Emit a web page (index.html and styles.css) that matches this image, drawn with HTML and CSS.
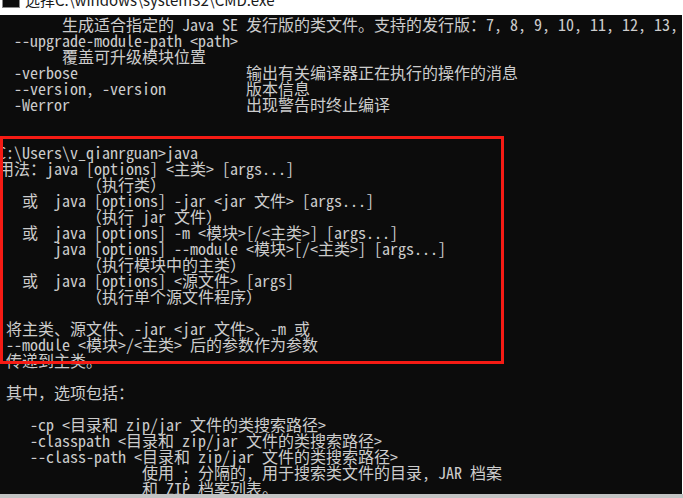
FILE: index.html
```html
<!DOCTYPE html>
<html lang="zh-CN">
<head>
    <meta charset="UTF-8">
    <link rel="stylesheet" href="styles.css">
</head>
<body>
    <div class="window">
        <div class="titlebar">
            <span class="app-icon"></span>
            <span class="title">选择C:\windows\system32\CMD.exe</span>
        </div>

        <div class="console">
            <div class="screen">
                <div class="ln">        生成适合指定的 Java SE 发行版的类文件。支持的发行版：7, 8, 9, 10, 11, 12, 13, 14</div>
                <div class="ln">  --upgrade-module-path &lt;path&gt;</div>
                <div class="ln">        覆盖可升级模块位置</div>
                <div class="ln">  -verbose                     输出有关编译器正在执行的操作的消息</div>
                <div class="ln">  --version, -version          版本信息</div>
                <div class="ln">  -Werror                      出现警告时终止编译</div>
                <div class="ln"></div>
                <div class="ln"></div>
                <div class="ln">C:\Users\v_qianrguan&gt;java</div>
                <div class="ln">用法：java [options] &lt;主类&gt; [args...]</div>
                <div class="ln">           （执行类）</div>
                <div class="ln">   或  java [options] -jar &lt;jar 文件&gt; [args...]</div>
                <div class="ln">           （执行 jar 文件）</div>
                <div class="ln">   或  java [options] -m &lt;模块&gt;[/&lt;主类&gt;] [args...]</div>
                <div class="ln">       java [options] --module &lt;模块&gt;[/&lt;主类&gt;] [args...]</div>
                <div class="ln">           （执行模块中的主类）</div>
                <div class="ln">   或  java [options] &lt;源文件&gt; [args]</div>
                <div class="ln">           （执行单个源文件程序）</div>
                <div class="ln"></div>
                <div class="ln"> 将主类、源文件、-jar &lt;jar 文件&gt;、-m 或</div>
                <div class="ln"> --module &lt;模块&gt;/&lt;主类&gt; 后的参数作为参数</div>
                <div class="ln"> 传递到主类。</div>
                <div class="ln"></div>
                <div class="ln"> 其中，选项包括：</div>
                <div class="ln"></div>
                <div class="ln">    -cp &lt;目录和 zip/jar 文件的类搜索路径&gt;</div>
                <div class="ln">    -classpath &lt;目录和 zip/jar 文件的类搜索路径&gt;</div>
                <div class="ln">    --class-path &lt;目录和 zip/jar 文件的类搜索路径&gt;</div>
                <div class="ln">                  使用 ; 分隔的, 用于搜索类文件的目录, JAR 档案</div>
                <div class="ln">                  和 ZIP 档案列表。</div>
            </div>

            <!-- 标注框 -->
            <div class="highlight"></div>
        </div>

        <div class="bottom-strip"></div>
    </div>
</body>
</html>
```

FILE: styles.css
```css
/* 基础 */
html, body {
    margin: 0;
    padding: 0;
    background: #ffffff;
}

.window {
    width: 683px;
    height: 498px;
    overflow: hidden;
}

/* 标题栏 */
.titlebar {
    height: 15px;
    overflow: hidden;
    display: flex;
    align-items: flex-start;
    gap: 5px;
    padding-left: 2px;
    background: #ffffff;
}

.app-icon {
    flex: none;
    width: 16px;
    height: 14px;
    margin-top: -8px;
    background: #0c0c0c;
    border: 1px solid #8a8a8a;
}

.title {
    margin-top: -8px;
    font-family: "Noto Sans CJK SC", "Liberation Sans", sans-serif;
    font-size: 15px;
    line-height: 15px;
    color: #1a1a1a;
    white-space: nowrap;
}

/* 控制台 */
.console {
    position: relative;
    width: 682px;
    height: 479px;
    background: #0c0c0c;
    overflow: hidden;
}

.screen {
    margin: 1px 0 0 -2px;
    font-family: "Noto Sans Mono CJK SC", "Noto Sans CJK SC", monospace;
    font-size: 16px;
    line-height: 16px;
    color: #cccccc;
}

.screen .ln {
    height: 16px;
    white-space: pre;
}

/* 红色标注框 */
.highlight {
    position: absolute;
    left: 0;
    top: 121px;
    width: 498px;
    height: 222px;
    border: 3px solid #f51b14;
}

.bottom-strip {
    height: 4px;
    background: #c4c4c4;
}
```
